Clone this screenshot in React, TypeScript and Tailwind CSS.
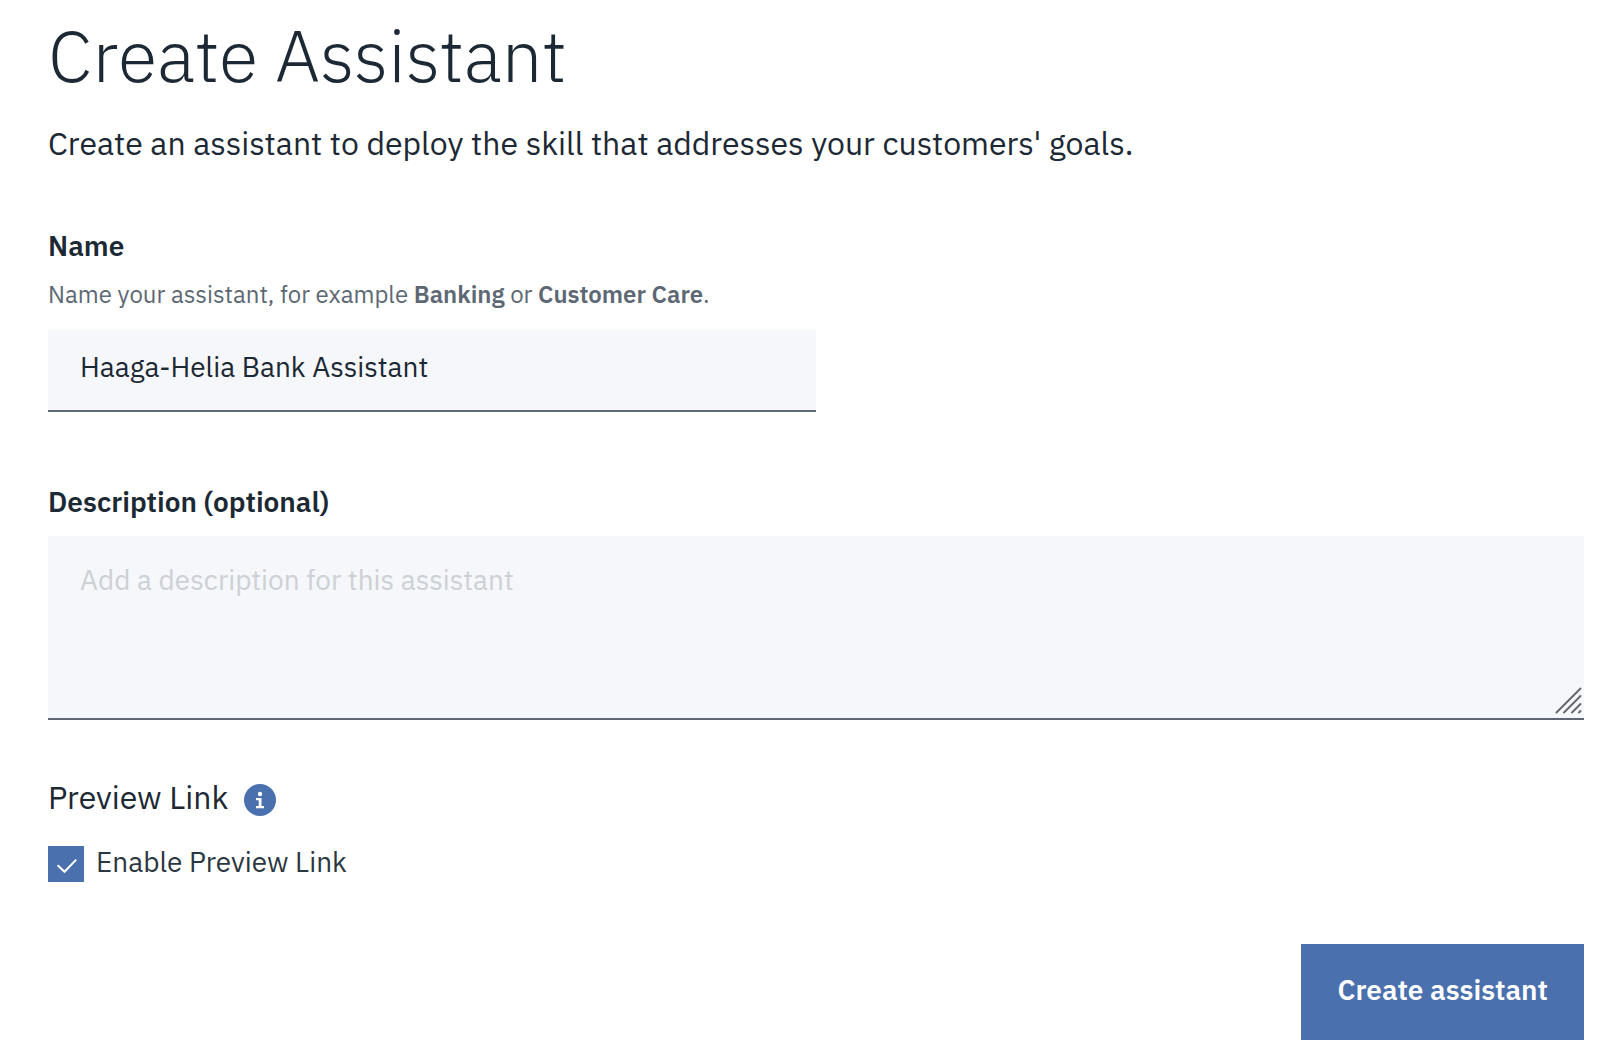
import { useState } from "react";

function InfoIcon() {
  return (
    <svg viewBox="0 0 32 32" className="size-8" aria-hidden="true">
      <circle cx="16" cy="16" r="16" fill="#4a70ae" />
      <circle cx="16" cy="10" r="2.2" fill="#fff" />
      <path d="M12 14.1h5.5v7.9h2.5v2.2h-8v-2.2h2.7v-5.7h-2.7z" fill="#fff" />
    </svg>
  );
}

function CheckIcon() {
  return (
    <svg
      viewBox="0 0 36 36"
      className="pointer-events-none absolute inset-0 hidden size-9 peer-checked:block"
      fill="none"
      stroke="#fff"
      strokeWidth="2"
      aria-hidden="true"
    >
      <path d="M9.6 19.2l6.9 6.6L28.2 13.6" />
    </svg>
  );
}

function ResizeGrip() {
  return (
    <svg
      viewBox="0 0 28 28"
      className="pointer-events-none absolute right-0.5 bottom-1.5 size-7"
      fill="none"
      stroke="#66686b"
      strokeWidth="2"
      strokeLinecap="round"
      aria-hidden="true"
    >
      <path d="M2.5 26.5l24-24M10 26.5L26.5 10M18 26.5l8.5-8.5M25 26.5l1.5-1.5" />
    </svg>
  );
}

export default function App() {
  const [name, setName] = useState("Haaga-Helia Bank Assistant");
  const [description, setDescription] = useState("");
  const [preview, setPreview] = useState(true);

  return (
    <main className="min-h-screen bg-white pt-2.5 pr-7 pb-6 pl-12 font-['IBM_Plex_Sans','Roboto',sans-serif] text-[#1c2934]">
      <form onSubmit={(e) => e.preventDefault()}>
        <h1 className="text-[72px] leading-[90px] font-light">Create Assistant</h1>
        <p className="mt-5 text-[32px] leading-[46px]">
          Create an assistant to deploy the skill that addresses your customers' goals.
        </p>

        <div className="mt-15">
          <label htmlFor="name" className="block text-[28px] leading-10 font-semibold">
            Name
          </label>
          <p id="name-help" className="mt-3 text-[24px] leading-8 text-[#5d6874]">
            Name your assistant, for example <b className="font-semibold">Banking</b> or{" "}
            <b className="font-semibold">Customer Care</b>.
          </p>
          <input
            id="name"
            type="text"
            aria-describedby="name-help"
            value={name}
            onChange={(e) => setName(e.target.value)}
            className="mt-5 block w-1/2 border-b-2 border-[#5d6874] bg-[#f5f7fb] px-8 pt-[17px] pb-[23px] text-[28px] leading-10 outline-none"
          />
        </div>

        <div className="mt-[70px]">
          <label htmlFor="description" className="block text-[28px] leading-10 font-semibold">
            Description (optional)
          </label>
          <div className="relative mt-3.5">
            <textarea
              id="description"
              rows={3}
              value={description}
              onChange={(e) => setDescription(e.target.value)}
              placeholder="Add a description for this assistant"
              className="block w-full resize-none border-b-2 border-[#5d6874] bg-[#f5f7fb] px-8 pt-6 pb-[38px] text-[28px] leading-10 outline-none placeholder:text-[#cdd0d4]"
            />
            <ResizeGrip />
          </div>
        </div>

        <div className="mt-14 flex items-center gap-4">
          <h2 className="text-[32px] leading-[42px]">Preview Link</h2>
          <button type="button" aria-label="About Preview Link" className="mt-1.5">
            <InfoIcon />
          </button>
        </div>

        <label className="mt-7 flex items-start gap-3 text-[28px] leading-8 text-[#2b3741]">
          <span className="relative size-9">
            <input
              type="checkbox"
              checked={preview}
              onChange={(e) => setPreview(e.target.checked)}
              className="peer block size-9 appearance-none border-2 border-[#4a70ae] bg-white checked:bg-[#4a70ae]"
            />
            <CheckIcon />
          </span>
          Enable Preview Link
        </label>

        <div className="mt-[62px] flex justify-end">
          <button
            type="submit"
            className="bg-[#4a70ae] px-9 pt-[26px] pb-[30px] text-[28px] leading-10 font-semibold text-white"
          >
            Create assistant
          </button>
        </div>
      </form>
    </main>
  );
}
